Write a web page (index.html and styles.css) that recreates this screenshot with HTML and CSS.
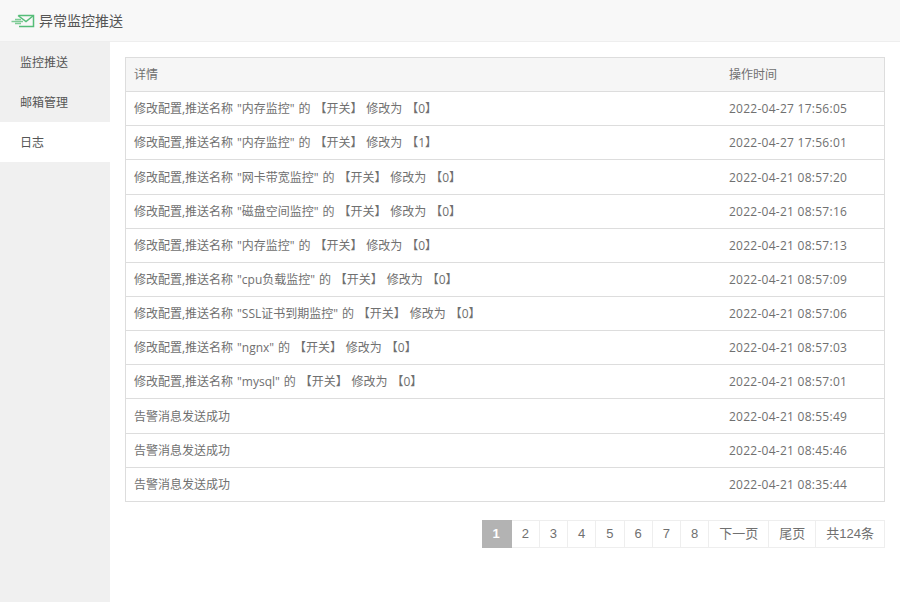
FILE: index.html
```html
<!DOCTYPE html>
<html lang="zh-CN">
<head>
<meta charset="utf-8">
<title>异常监控推送</title>
<link rel="stylesheet" href="styles.css">
</head>
<body>
<header class="topbar">
  <svg class="logo" width="24" height="14" viewBox="0 0 24 14" fill="none">
    <path d="M7.5 1.5H22.5V12.5H8" stroke="#55bd78" stroke-width="1.5"/>
    <path d="M7 1.5L15 7.5L22.5 1.5" stroke="#55bd78" stroke-width="1.5"/>
    <path d="M4 5.5H10M0.5 7.5H12M4 9.5H10" stroke="#7fcb96" stroke-width="1.3"/>
  </svg>
  <span class="topbar-title">异常监控推送</span>
</header>
<div class="main">
  <nav class="side">
    <a class="side-item">监控推送</a>
    <a class="side-item">邮箱管理</a>
    <a class="side-item active">日志</a>
  </nav>
  <section class="content">
    <table class="log">
      <thead>
        <tr><th class="c-detail">详情</th><th class="c-time">操作时间</th></tr>
      </thead>
      <tbody>
        <tr><td>修改配置,推送名称 "内存监控" 的 【开关】 修改为 【0】</td><td class="time">2022-04-27 17:56:05</td></tr>
        <tr><td>修改配置,推送名称 "内存监控" 的 【开关】 修改为 【1】</td><td class="time">2022-04-27 17:56:01</td></tr>
        <tr><td>修改配置,推送名称 "网卡带宽监控" 的 【开关】 修改为 【0】</td><td class="time">2022-04-21 08:57:20</td></tr>
        <tr><td>修改配置,推送名称 "磁盘空间监控" 的 【开关】 修改为 【0】</td><td class="time">2022-04-21 08:57:16</td></tr>
        <tr><td>修改配置,推送名称 "内存监控" 的 【开关】 修改为 【0】</td><td class="time">2022-04-21 08:57:13</td></tr>
        <tr><td>修改配置,推送名称 "cpu负载监控" 的 【开关】 修改为 【0】</td><td class="time">2022-04-21 08:57:09</td></tr>
        <tr><td>修改配置,推送名称 "SSL证书到期监控" 的 【开关】 修改为 【0】</td><td class="time">2022-04-21 08:57:06</td></tr>
        <tr><td>修改配置,推送名称 "ngnx" 的 【开关】 修改为 【0】</td><td class="time">2022-04-21 08:57:03</td></tr>
        <tr><td>修改配置,推送名称 "mysql" 的 【开关】 修改为 【0】</td><td class="time">2022-04-21 08:57:01</td></tr>
        <tr><td>告警消息发送成功</td><td class="time">2022-04-21 08:55:49</td></tr>
        <tr><td>告警消息发送成功</td><td class="time">2022-04-21 08:45:46</td></tr>
        <tr><td>告警消息发送成功</td><td class="time">2022-04-21 08:35:44</td></tr>
      </tbody>
    </table>
    <div class="pager">
      <span class="page current">1</span>
      <span class="page">2</span>
      <span class="page">3</span>
      <span class="page">4</span>
      <span class="page">5</span>
      <span class="page">6</span>
      <span class="page">7</span>
      <span class="page">8</span>
      <span class="page">下一页</span>
      <span class="page">尾页</span>
      <span class="page">共124条</span>
    </div>
  </section>
</div>
</body>
</html>
```

FILE: styles.css
```css
* { box-sizing: border-box; }
html, body { height: 100%; }
body {
  margin: 0;
  display: flex;
  flex-direction: column;
  background: #fff;
  color: #666;
  font: 12px/1.4 "Open Sans", "Noto Sans CJK SC", sans-serif;
  overflow: hidden;
}
.topbar {
  height: 42px;
  flex: none;
  display: flex;
  align-items: center;
  gap: 4px;
  padding-left: 11px;
  background: #f8f8f8;
  border-bottom: 1px solid #eee;
}
.topbar-title { font-size: 14px; color: #555; }
.logo { flex: none; }
.main { flex: 1; display: flex; min-height: 0; }
.side { width: 110px; flex: none; background: #f0f0f0; }
.side-item {
  display: block;
  height: 40px;
  line-height: 41px;
  padding-left: 20px;
  color: #555;
}
.side-item.active { background: #fff; }
.content { flex: 1; padding: 15px 15px 0; min-width: 0; }
.log {
  width: 100%;
  border-collapse: collapse;
  table-layout: fixed;
  border: 1px solid #ddd;
}
.log tr { height: 34.15px; }
.log th, .log td {
  padding: 2px 8px 0;
  text-align: left;
  font-weight: 400;
  border-top: 1px solid #ddd;
  color: #707070;
  white-space: nowrap;
  word-spacing: 0.8px;
}
.log th { background: #f6f6f6; border-top: 0; }
.log .time { letter-spacing: 0.26px; word-spacing: 0; }
.c-time { width: 163.5px; }
.pager {
  display: flex;
  justify-content: flex-end;
  margin-top: 18px;
}
.page {
  height: 28px;
  padding: 0 10px;
  border: 1px solid #eee;
  border-left-width: 0;
  font: 13px/25px "Liberation Sans", "Noto Sans CJK SC", sans-serif;
  color: #707070;
}
.page.current {
  padding: 0 11px 0 10px;
  background: #b3b3b3;
  border-color: #b3b3b3;
  color: #fff;
  font-weight: 700;
}
```
